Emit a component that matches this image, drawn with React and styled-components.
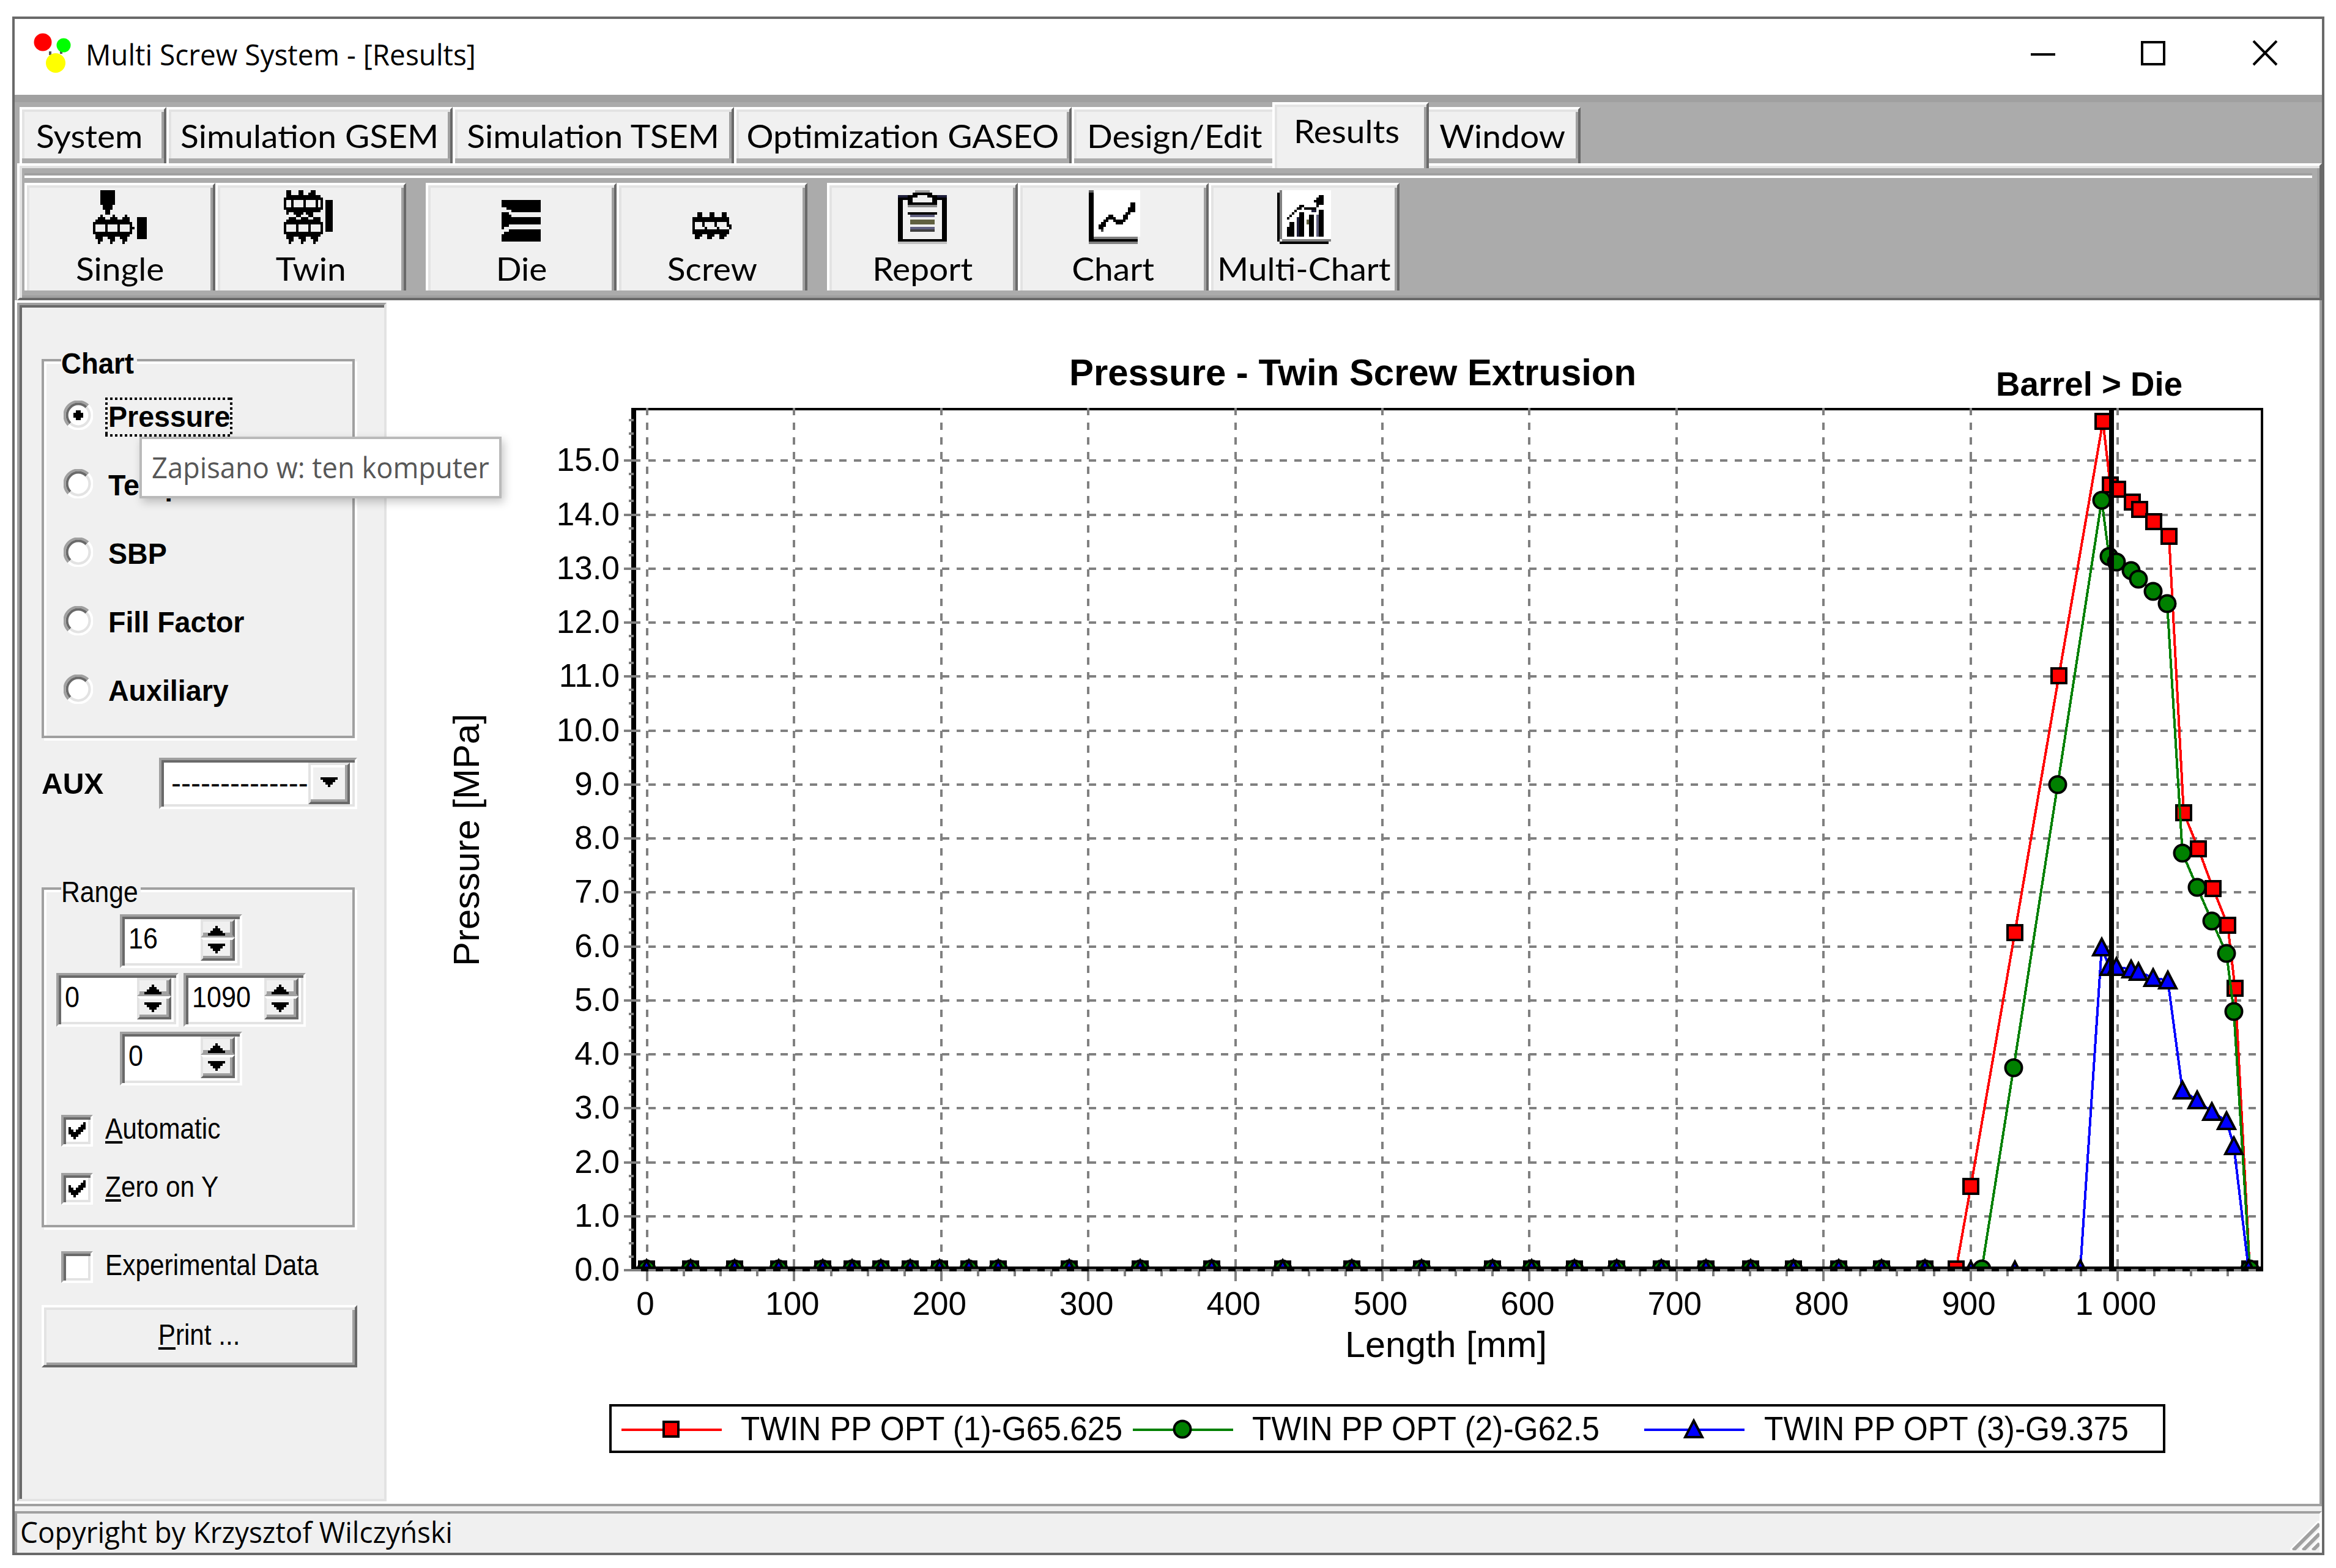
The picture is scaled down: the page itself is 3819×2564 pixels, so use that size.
import React, {useState} from 'react';
import styled, {createGlobalStyle, css} from 'styled-components';

const GlobalStyle = createGlobalStyle`
* { box-sizing: border-box; }
body {
  margin: 0;
  background: #ffffff;
  color: #000000;
  font-family: "Liberation Sans", Arial, sans-serif;
}
`
const Page = styled.div`
width: 3819px;
height: 2564px;
padding: 27px 19px 20px 20px;
`
const Window = styled.div`
width: 3780px;
height: 2516px;
border: 4px solid #696969;
display: flex;
flex-direction: column;
background: #ffffff;
`
// keeps the letter height but narrows / widens the line
const Squeeze = styled.span`
display: inline-block;
white-space: pre;
transform: scaleX(${p => p.$x});
transform-origin: ${p => p.$center ? 'center' : 'left'};
`

/* title bar */
const TitleBar = styled.div`
height: 124px;
flex: none;
display: flex;
align-items: flex-start;
padding: 21px 72px 0 28px;
`
const TitleText = styled.div`
flex: 1;
margin-left: 24px;
margin-top: 5px;
font: 48px/64px "Open Sans", sans-serif;
`
const WinButtons = styled.div`
display: flex;
gap: 140px;
margin-top: 14px;
svg { display: block; }
`

/* tabs */
const TabStrip = styled.div`
height: 112px;
flex: none;
border-top: 12px solid #a0a0a0;
background: #ababab;
padding-left: 8px;
display: flex;
align-items: flex-end;
`
const Tab = styled.div`
width: ${p => p.$w}px;
height: 92px;
padding-bottom: 8px;
background: #ababab;
border: 4px solid #ffffff;
border-right-color: #696969;
border-bottom: none;
font: 52px/80px Lato, sans-serif;
${p => p.$active && css`
  height: 108px;
  padding-bottom: 0;
  margin: 0 -8px -8px;
  z-index: 1;
`}
`
const TabFace = styled.div`
height: 100%;
display: flex;
justify-content: center;
background: #f0f0f0;
box-shadow: inset 4px 4px 0 #e3e3e3, inset -4px 0 0 #a0a0a0;
padding: 3px ${p => p.$pull || 0}px 0 0;
`

/* toolbar */
const ToolPanel = styled.div`
height: 224px;
flex: none;
background: #ababab;
border: 4px solid #ffffff;
border-right-color: #696969;
border-bottom-color: #696969;
box-shadow: inset 4px 4px 0 #e3e3e3, inset -4px -4px 0 #a0a0a0, -4px 0 0 #ababab;
margin-left: 4px;
padding: 12px 12px 0 8px;
`
const Groove = styled.div`
height: 8px;
border-top: 4px solid #a0a0a0;
border-bottom: 4px solid #ffffff;
`
const Tools = styled.div`
display: flex;
gap: 32px;
margin-top: 8px;
`
const ToolGroup = styled.div`
display: flex;
`
const ToolButton = styled.div`
width: 312px;
height: 176px;
background: #f0f0f0;
border: 4px solid #ffffff;
border-right-color: #696969;
border-bottom: none;
box-shadow: inset 4px 4px 0 #e3e3e3, inset -4px 0 0 #a0a0a0;
display: flex;
flex-direction: column;
align-items: center;
font: 52px/60px Lato, sans-serif;
svg { display: block; flex: none; overflow: visible; margin: 8px 0 10px; }
`

/* body */
const Body = styled.div`
height: 1968px;
flex: none;
display: flex;
position: relative;
border-right: 4px solid #a0a0a0;
`
const Sidebar = styled.div`
width: 604px;
height: 1960px;
margin: 4px 0 4px 4px;
padding: 88px 0 0 36px;
background: #f0f0f0;
border: 4px solid #a0a0a0;
border-right-color: #e3e3e3;
border-bottom-color: #e3e3e3;
box-shadow: inset 4px 4px 0 #696969;
font-size: 49px;
line-height: 52px;
`
const Group = styled.div`
width: 512px;
height: ${p => p.$h}px;
margin-top: ${p => p.$mt || 0}px;
border: 4px solid #a0a0a0;
box-shadow: 4px 4px 0 #ffffff, inset 4px 4px 0 #ffffff;
`
const Legend = styled.div`
width: ${p => p.$w}px;
height: 48px;
line-height: 48px;
margin: -21px 0 0 28px;
background: #f0f0f0;
font-weight: ${p => p.$bold ? 'bold' : 'normal'};
`
const RadioList = styled.div`
display: flex;
flex-direction: column;
gap: 48px;
padding: 32px 0 0 32px;
`
const RadioRow = styled.div`
display: flex;
height: 64px;
svg { display: block; margin: 5px 20px 0 0; }
`
const dots = 'repeating-linear-gradient(90deg, #000 0 4px, transparent 4px 8px)';
const dotsV = 'repeating-linear-gradient(180deg, #000 0 4px, transparent 4px 8px)';
const RadioLabel = styled.div`
width: 208px;
height: 64px;
padding-left: 5px;
line-height: 62px;
white-space: nowrap;
font-weight: bold;
${p => p.$focus && css`
  background: ${dots} 0 0 / 100% 4px no-repeat, ${dots} 0 100% / 100% 4px no-repeat,
    ${dotsV} 0 0 / 4px 100% no-repeat, ${dotsV} 100% 0 / 4px 100% no-repeat;
`}
`
const AuxRow = styled.div`
width: 516px;
margin-top: 32px;
display: flex;
align-items: center;
justify-content: space-between;
font-weight: bold;
`
const sunken = css`
background: #ffffff;
border: 4px solid #a0a0a0;
border-right-color: #ffffff;
border-bottom-color: #ffffff;
box-shadow: inset 4px 4px 0 #696969, inset -4px -4px 0 #e3e3e3;
`
const raised = css`
background: #f0f0f0;
border: 4px solid #e3e3e3;
border-right-color: #696969;
border-bottom-color: #696969;
box-shadow: inset -4px -4px 0 #a0a0a0, inset 4px 4px 0 #ffffff;
`
const Combo = styled.div`
${sunken}
width: 324px;
height: 84px;
padding: 4px 8px 4px 16px;
display: flex;
justify-content: space-between;
font-size: 48px;
font-weight: normal;
line-height: 68px;
white-space: nowrap;
`
const ComboButton = styled.div`
${raised}
width: 68px;
height: 68px;
flex: none;
margin-left: -8px;
svg { display: block; margin: 20px 0 0 16px; }
`
const Spins = styled.div`
margin: 13px 0 0 20px;
width: 408px;
display: flex;
flex-direction: column;
gap: 8px;
`
const SpinRow = styled.div`
display: flex;
justify-content: center;
gap: 8px;
`
const SpinBox = styled.div`
${sunken}
width: 200px;
height: 88px;
padding: 4px 8px 8px 10px;
display: flex;
justify-content: space-between;
line-height: 62px;
`
const SpinButtons = styled.div`
width: 56px;
height: 68px;
flex: none;
margin-left: -60px;
`
const SpinButton = styled.div`
height: ${p => p.$down ? 38 : 30}px;
${raised}
box-shadow: inset -4px -4px 0 #a0a0a0;
border-bottom-color: ${p => p.$down ? '#696969' : '#a0a0a0'};
border-top-color: ${p => p.$down ? '#ffffff' : '#e3e3e3'};
svg { display: block; margin: ${p => p.$down ? 6 : 7}px 0 0 8px; }
`
const CheckRow = styled.div`
display: flex;
height: 52px;
gap: 20px;
margin: ${p => p.$mt}px 0 0 ${p => p.$ml || 28}px;
line-height: 44px;
`
const CheckBox = styled.div`
${sunken}
width: 52px;
height: 52px;
svg { display: block; margin: 8px; }
`
const Mnemonic = styled.span`
text-decoration: underline;
text-decoration-thickness: 4px;
text-underline-offset: 4px;
text-decoration-skip-ink: none;
`
const PrintButton = styled.div`
width: 516px;
height: 102px;
margin-top: 36px;
background: #f0f0f0;
border: 4px solid #ffffff;
border-right-color: #696969;
border-bottom-color: #696969;
box-shadow: inset 4px 4px 0 #e3e3e3, inset -4px -4px 0 #a0a0a0;
text-align: center;
line-height: 88px;
`
const Tooltip = styled.div`
position: absolute;
left: 204px;
top: 223px;
width: 592px;
height: 101px;
padding-left: 16px;
background: #ffffff;
border: 4px solid #bababa;
box-shadow: 4px 6px 14px rgba(0, 0, 0, 0.22);
color: #575757;
font: 48px/92px "Open Sans", sans-serif;
`
const ChartArea = styled.svg`
display: block;
width: 3160px;
height: 1968px;
`
const StatusBar = styled.div`
flex: 1;
padding-top: 8px;
border-top: 4px solid #a0a0a0;
background: #f0f0f0;
`
const StatusPanel = styled.div`
height: 68px;
display: flex;
justify-content: space-between;
align-items: flex-end;
padding: 0 0 4px 5px;
border-top: 4px solid #a0a0a0;
border-left: 4px solid #a0a0a0;
border-right: 4px solid #ffffff;
font: 48px/60px "Open Sans", sans-serif;
`

/* Toolbar glyphs are small bitmaps, one unit = 4px. Each entry is [x, y, w, h, color]. */
const barrel = (y) => [
    [1, y + 1, 14, 1], [0, y + 2, 16, 1],
    [0, y + 3, 1, 3], [5, y + 3, 1, 3], [10, y + 3, 1, 3], [15, y + 3, 1, 3],
    [0, y + 6, 16, 1], [1, y + 7, 14, 1],
    [1, y + 8, 3, 1], [6, y + 8, 3, 1], [11, y + 8, 3, 1],
    [2, y + 9, 2, 1], [7, y + 9, 2, 1], [12, y + 9, 2, 1],
    [2, y + 10, 1, 1], [7, y + 10, 1, 1], [12, y + 10, 1, 1],
];

const bitmaps = {
    Single: {w: 22, px: [
        [3, 0, 6, 6], [4, 6, 4, 2], [5, 8, 2, 2],
        [3, 10, 1, 1], [8, 10, 1, 1], [13, 10, 1, 1],
        [2, 11, 3, 1], [7, 11, 3, 1], [12, 11, 3, 1],
        ...barrel(11), [16, 15, 1, 1], [18, 11, 4, 9]]},
    Twin: {w: 22, px: [
        [1, 0, 2, 2], [6, 0, 2, 2], [11, 0, 2, 2], [10, 1, 1, 1],
        [1, 2, 14, 1], [0, 3, 16, 1],
        [0, 4, 1, 3], [3, 4, 1, 3], [8, 4, 1, 3], [13, 4, 1, 3], [15, 4, 1, 3],
        [0, 7, 16, 1], [1, 8, 14, 1],
        [1, 9, 1, 1], [4, 9, 4, 1], [9, 9, 3, 1], [5, 10, 2, 1], [10, 10, 2, 1],
        [2, 11, 3, 1], [7, 11, 3, 1], [12, 11, 3, 1],
        ...barrel(11), [17, 4, 3, 13]]},
    Die: {w: 16, px: [
        [0, 4, 16, 3], [2, 7, 14, 1], [4, 8, 12, 1],
        [0, 9, 3, 1], [0, 10, 4, 1], [0, 11, 16, 3], [0, 14, 3, 1], [0, 15, 1, 1],
        [3, 16, 13, 1], [1, 17, 15, 1], [0, 18, 16, 3]]},
    Screw: {w: 16, px: [
        [2, 9, 2, 2], [7, 9, 2, 2], [12, 9, 2, 2],
        [0, 11, 15, 2],
        [0, 13, 1, 3], [4, 13, 1, 2], [5, 15, 1, 1], [9, 13, 1, 2], [10, 15, 1, 1], [14, 13, 1, 2], [15, 14, 1, 2],
        [0, 16, 15, 2], [1, 18, 3, 1], [6, 18, 3, 1], [11, 18, 3, 1],
        [1, 19, 2, 1], [6, 19, 2, 1], [11, 19, 2, 1]]},
    Report: {w: 20, px: [
        [7, 0, 6, 1, '#a0a0a0'], [6, 1, 8, 1], [6, 2, 2, 1], [12, 2, 2, 1],
        [0, 2, 4, 1, '#20203c'], [16, 2, 4, 1, '#20203c'], [4, 2, 2, 1], [14, 2, 2, 1],
        [0, 3, 6, 1], [14, 3, 6, 1], [4, 4, 2, 2], [14, 4, 2, 2], [4, 5, 12, 1],
        [4, 6, 12, 1, '#8a8a8a'],
        [0, 3, 2, 18], [18, 3, 2, 18], [0, 20, 20, 1], [0, 21, 20, 1, '#c0c0c0'],
        [4, 9, 12, 1], [5, 10, 10, 1, '#606080'], [5, 12, 10, 2, '#606040'],
        [5, 15, 10, 1, '#606080'], [5, 16, 10, 1, '#404040']]},
    Chart: {w: 20, px: [
        [2, 0, 19, 19, '#fff'], [0, 0, 2, 1, '#606060'], [0, 1, 2, 20],
        [2, 19, 18, 1, '#808080'], [0, 20, 20, 1], [0, 21, 20, 1, '#808080'],
        [4, 14, 2, 2], [5, 13, 2, 2], [6, 12, 2, 1], [7, 11, 2, 1], [8, 10, 2, 1], [9, 11, 2, 1],
        [10, 12, 3, 1], [11, 13, 3, 1], [13, 12, 2, 1], [14, 10, 2, 2], [15, 9, 2, 1],
        [16, 7, 2, 2], [17, 5, 2, 4], [5, 16, 1, 1, '#404040']]},
    'Multi-Chart': {w: 22, px: [
        [2, 0, 20, 20, '#fff'], [0, 1, 1, 20], [1, 0, 1, 20, '#808080'],
        [2, 20, 20, 1, '#808080'], [1, 21, 20, 1],
        [4, 15, 2, 4], [5, 13, 2, 6], [8, 11, 1, 8, '#20203c'], [9, 9, 2, 10],
        [12, 12, 1, 2, '#606040'], [13, 10, 2, 9], [16, 10, 1, 9, '#606080'], [17, 8, 2, 11],
        [4, 11, 1, 1], [5, 10, 1, 1], [6, 9, 1, 1], [7, 8, 1, 1], [8, 7, 2, 1], [9, 6, 2, 1],
        [11, 7, 5, 1], [14, 8, 2, 1, '#20203c'], [16, 5, 1, 2], [15, 4, 4, 1], [16, 5, 3, 1],
        [16, 3, 3, 1], [17, 2, 2, 1]]},
};

function Bitmap({name}){
    const {w, px} = bitmaps[name];
    return(
    <svg width={w * 4} height={88} viewBox={`0 0 ${w} 22`} shapeRendering="crispEdges">
        {px.map(([x, y, pw, ph, fill], i) => <rect key={i} x={x} y={y} width={pw} height={ph} fill={fill || '#000'}/>)}
    </svg>
    );
}

const tabs = [
    {name: "System", w: 240, pull: 12},
    {name: "Simulation GSEM", w: 468},
    {name: "Simulation TSEM", w: 460},
    {name: "Optimization GASEO", w: 552},
    {name: "Design/Edit", w: 336},
    {name: "Results", w: 256, pull: 12},
    {name: "Window", w: 256},
];
const toolGroups = [["Single", "Twin"], ["Die", "Screw"], ["Report", "Chart", "Multi-Chart"]];
const radios = ["Pressure", "Temperature", "SBP", "Fill Factor", "Auxiliary"];

/* chart data, already in chart units (px) */
const red = [[3198, 2075], [3222, 1940], [3294, 1525], [3366, 1105], [3438, 689], [3450, 793], [3462, 800], [3486, 821], [3498, 833], [3521, 853], [3546, 877], [3570, 1329], [3594, 1388], [3618, 1453], [3642, 1513], [3654, 1616], [3678, 2075]];
const green = [[3240, 2075], [3292, 1746], [3364, 1283], [3436, 818], [3448, 910], [3460, 919], [3484, 933], [3496, 947], [3520, 967], [3543, 987], [3568, 1395], [3592, 1451], [3616, 1506], [3640, 1559], [3652, 1654], [3678, 2075]];
const blue = [[3401, 2075], [3436, 1549], [3448, 1581], [3460, 1581], [3484, 1585], [3496, 1589], [3520, 1599], [3544, 1603], [3568, 1783], [3592, 1799], [3616, 1818], [3640, 1833], [3652, 1874], [3676, 2075]];
const zeros = [1057, 1129, 1201, 1273, 1345, 1393, 1440, 1488, 1536, 1584, 1632, 1748, 1864, 1981, 2097, 2210, 2324, 2440, 2504, 2574, 2643, 2716, 2789, 2862, 2932, 3006, 3076, 3147];
const series = [
    {color: "#ff0000", shape: "square", points: red, extra: [], label: "TWIN PP OPT (1)-G65.625", x: 1016, tx: 1211, tw: 624},
    {color: "#008000", shape: "circle", points: green, extra: [], label: "TWIN PP OPT (2)-G62.5", x: 1852, tx: 2047, tw: 568},
    {color: "#0000ff", shape: "triangle", points: blue, extra: [3222, 3294], label: "TWIN PP OPT (3)-G9.375", x: 2688, tx: 2884, tw: 596},
];

function Marker({shape, color, x, y}){
    if(shape === "square") return <rect x={x - 12} y={y - 12} width="24" height="24" fill={color} stroke="#000" strokeWidth="4"/>;
    if(shape === "circle") return <circle cx={x} cy={y} r="13.5" fill={color} stroke="#000" strokeWidth="4"/>;
    return <path d={`M${x} ${y - 14}L${x + 14} ${y + 13}H${x - 14}Z`} fill={color} stroke="#000" strokeWidth="4"/>;
}

const px = (v) => 1058 + v * 2.404;
const py = (v) => 2077 - v * 88.25;
const range = (n) => [...Array(n).keys()];

function PressureChart(){
    return(
    <ChartArea viewBox="632 491 3160 1968" fontFamily='"Liberation Sans", Arial, sans-serif' fontSize="54">
        <clipPath id="plot"><rect x="1032" y="660" width="2672" height="1415"/></clipPath>
        <text x="1748" y="630" fontSize="62" fontWeight="bold" textLength="927" lengthAdjust="spacingAndGlyphs">Pressure - Twin Screw Extrusion</text>
        <text x="3263" y="647" fontSize="56" fontWeight="bold" textLength="305" lengthAdjust="spacingAndGlyphs">{"Barrel > Die"}</text>
        <path d="M1036 669H3698V2077" fill="none" stroke="#000" strokeWidth="4" shapeRendering="crispEdges"/>
        <g stroke="#808080" strokeWidth="4" strokeDasharray="12 12" shapeRendering="crispEdges">
            {range(15).map(i => <path key={i} d={`M1060 ${py(i + 1)}H3690`}/>)}
            {range(11).map(i => <path key={i} d={`M${px(i * 100)} 667V2072`}/>)}
        </g>
        <g clipPath="url(#plot)">
            {series.map(s =>
                <g key={s.shape}>
                    <polyline points={s.points.join(' ')} fill="none" stroke={s.color} strokeWidth="4" shapeRendering="crispEdges"/>
                    {zeros.map(x => <Marker key={x} {...s} x={x} y={2075}/>)}
                    {s.extra.map(x => <Marker key={x} {...s} x={x} y={2077}/>)}
                    {s.points.map(([x, y]) => <Marker key={x} {...s} x={x} y={y}/>)}
                </g>)}
        </g>
        <g shapeRendering="crispEdges">
            <path d="M3452 667V2079" stroke="#000" strokeWidth="8"/>
            <path d="M1036 667V2075M1032 2075H3700" stroke="#000" strokeWidth="8"/>
            <path d="M1036 2077H3690" stroke="#808080" strokeWidth="4" strokeDasharray="12 12"/>
            <g stroke="#808080" strokeWidth="4">
                {range(16).map(i => <path key={i} d={`M1020 ${py(i)}H1047`}/>)}
                {range(63).map(i => i % 4 !== 3 && <path key={i} d={`M1028 ${py((i + 1) / 4)}H1036`}/>)}
                {range(11).map(i => <path key={i} d={`M${px(i * 100)} 2079V2095`}/>)}
                {range(43).map(i => i % 4 !== 3 && <path key={i} d={`M${px((i + 1) * 25)} 2079V2087`}/>)}
            </g>
        </g>
        {range(16).map(i => <text key={i} x="1013" y={py(i) + 17} textAnchor="end" fontSize="53">{i}.0</text>)}
        {range(11).map(i => <text key={i} x={px(i * 100) - 3} y="2150" textAnchor="middle" fontSize="53">{i === 10 ? "1 000" : i * 100}</text>)}
        <text x="2199" y="2219" fontSize="60" textLength="330" lengthAdjust="spacingAndGlyphs">Length [mm]</text>
        <text transform="translate(783 1580) rotate(-90)" fontSize="60" textLength="413" lengthAdjust="spacingAndGlyphs">Pressure [MPa]</text>
        <rect x="998" y="2298" width="2540" height="76" fill="#fff" stroke="#000" strokeWidth="4" shapeRendering="crispEdges"/>
        {series.map(s =>
            <g key={s.shape}>
                <path d={`M${s.x} 2338h164`} stroke={s.color} strokeWidth="4"/>
                <Marker {...s} x={s.x + 81} y={2337}/>
                <text x={s.tx} y="2355" fontSize="56" textLength={s.tw} lengthAdjust="spacingAndGlyphs">{s.label}</text>
            </g>)}
    </ChartArea>
    );
}

function Spin({value}){
    return(
    <SpinBox>
        <Squeeze $x={0.88}>{value}</Squeeze>
        <SpinButtons>
            <SpinButton><svg width="28" height="16" shapeRendering="crispEdges"><path d="M12 0h4v4h4v4h4v4h4v4H0v-4h4v-4h4v-4h4z"/></svg></SpinButton>
            <SpinButton $down><svg width="28" height="16" shapeRendering="crispEdges"><path d="M0 0h28v4h-4v4h-4v4h-4v4h-4v-4h-4v-4h-4v-4H0z"/></svg></SpinButton>
        </SpinButtons>
    </SpinBox>
    );
}

function Check({checked, mt, ml, onClick, children}){
    return(
    <CheckRow $mt={mt} $ml={ml} onClick={onClick}>
        <CheckBox>{checked && <svg width="28" height="28" shapeRendering="crispEdges"><path d="M0 8h4v4h4v4h4v-4h4v-4h4v-4h4v-4h4v12h-4v4h-4v4h-4v4h-4v4h-4v-4h-4v-4h-4z"/></svg>}</CheckBox>
        <Squeeze $x={0.865}>{children}</Squeeze>
    </CheckRow>
    );
}

function Radio({on}){
    return(
    <svg width="48" height="48" viewBox="0 0 48 48">
        <circle cx="24" cy="24" r="20" fill="#fff"/>
        <path d="M8 40A22 22 0 0 1 40 8" fill="none" stroke="#a0a0a0" strokeWidth="4"/>
        <path d="M11 37A18 18 0 0 1 37 11" fill="none" stroke="#696969" strokeWidth="4"/>
        <path d="M40 8A22 22 0 0 1 8 40" fill="none" stroke="#fff" strokeWidth="4"/>
        <path d="M37 11A18 18 0 0 1 11 37" fill="none" stroke="#e3e3e3" strokeWidth="4"/>
        {on && <path d="M20 16h8v4h4v8h-4v4h-8v-4h-4v-8h4z" fill="#000"/>}
    </svg>
    );
}

function App(){
    const [tab, setTab] = useState("Results");
    const [chart, setChart] = useState("Pressure");
    const [automatic, setAutomatic] = useState(true);
    const [zeroY, setZeroY] = useState(true);
    const [experimental, setExperimental] = useState(false);

    return(
    <Page>
        <GlobalStyle/>
        <Window>
            <TitleBar>
                <svg width="64" height="70" viewBox="0 0 64 70">
                    <path d="M30 32v6M48 32v4" stroke="#555" strokeWidth="4"/>
                    <circle cx="18" cy="17" r="14.5" fill="#ff0000"/>
                    <circle cx="52" cy="22" r="11.5" fill="#00ff00"/>
                    <circle cx="39" cy="51" r="16" fill="#ffff00"/>
                </svg>
                <TitleText><Squeeze $x={0.957}>Multi Screw System - [Results]</Squeeze></TitleText>
                <WinButtons>
                    <svg width="40" height="42"><path d="M0 23h40" stroke="#000" strokeWidth="4"/></svg>
                    <svg width="40" height="42"><rect x="2" y="3" width="36" height="36" fill="none" stroke="#000" strokeWidth="4"/></svg>
                    <svg width="44" height="42"><path d="M4 1l38 39M42 1L4 40" stroke="#000" strokeWidth="4"/></svg>
                </WinButtons>
            </TitleBar>
            <TabStrip>
                {tabs.map(t =>
                    <Tab key={t.name} $w={t.w} $active={t.name === tab} onClick={() => setTab(t.name)}>
                        <TabFace $pull={t.pull}><Squeeze $x={1.06} $center>{t.name}</Squeeze></TabFace>
                    </Tab>)}
            </TabStrip>
            <ToolPanel>
                <Groove/>
                <Tools>
                    {toolGroups.map((group, i) =>
                        <ToolGroup key={i}>
                            {group.map(name => <ToolButton key={name}><Bitmap name={name}/><Squeeze $x={1.06} $center>{name}</Squeeze></ToolButton>)}
                        </ToolGroup>)}
                </Tools>
            </ToolPanel>
            <Body>
                <Sidebar>
                    <Group $h={620}>
                        <Legend $w={124} $bold><Squeeze $x={0.93}>Chart</Squeeze></Legend>
                        <RadioList>
                            {radios.map(name =>
                                <RadioRow key={name} onClick={() => setChart(name)}>
                                    <Radio on={chart === name}/>
                                    <RadioLabel $focus={chart === name}><Squeeze $x={0.95}>{name}</Squeeze></RadioLabel>
                                </RadioRow>)}
                        </RadioList>
                    </Group>
                    <AuxRow>
                        <Squeeze $x={0.98}>AUX</Squeeze>
                        <Combo>
                            --------------
                            <ComboButton><svg width="28" height="16" shapeRendering="crispEdges"><path d="M0 0h28v4h-4v4h-4v4h-4v4h-4v-4h-4v-4h-4v-4H0z"/></svg></ComboButton>
                        </Combo>
                    </AuxRow>
                    <Group $h={556} $mt={128}>
                        <Legend $w={130}><Squeeze $x={0.87}>Range</Squeeze></Legend>
                        <Spins>
                            <SpinRow><Spin value="16"/></SpinRow>
                            <SpinRow><Spin value="0"/><Spin value="1090"/></SpinRow>
                            <SpinRow><Spin value="0"/></SpinRow>
                        </Spins>
                        <Check checked={automatic} mt={48} onClick={() => setAutomatic(!automatic)}><Mnemonic>A</Mnemonic>utomatic</Check>
                        <Check checked={zeroY} mt={43} onClick={() => setZeroY(!zeroY)}><Mnemonic>Z</Mnemonic>ero on Y</Check>
                    </Group>
                    <Check checked={experimental} mt={39} ml={32} onClick={() => setExperimental(!experimental)}>Experimental Data</Check>
                    <PrintButton><Squeeze $x={0.86} $center><Mnemonic>P</Mnemonic>rint ...</Squeeze></PrintButton>
                </Sidebar>
                <PressureChart/>
                <Tooltip><Squeeze $x={0.943}>Zapisano w: ten komputer</Squeeze></Tooltip>
            </Body>
            <StatusBar>
                <StatusPanel>
                    <Squeeze $x={0.957}>Copyright by Krzysztof Wilczyński</Squeeze>
                    <svg width="48" height="48" viewBox="0 0 48 48">
                        <path d="M0 48L48 0M16 48L48 16M32 48L48 32" stroke="#fff" strokeWidth="4"/>
                        <path d="M5 48L48 5M21 48L48 21M37 48L48 37" stroke="#a0a0a0" strokeWidth="6"/>
                    </svg>
                </StatusPanel>
            </StatusBar>
        </Window>
    </Page>
    );
}

export default App;
